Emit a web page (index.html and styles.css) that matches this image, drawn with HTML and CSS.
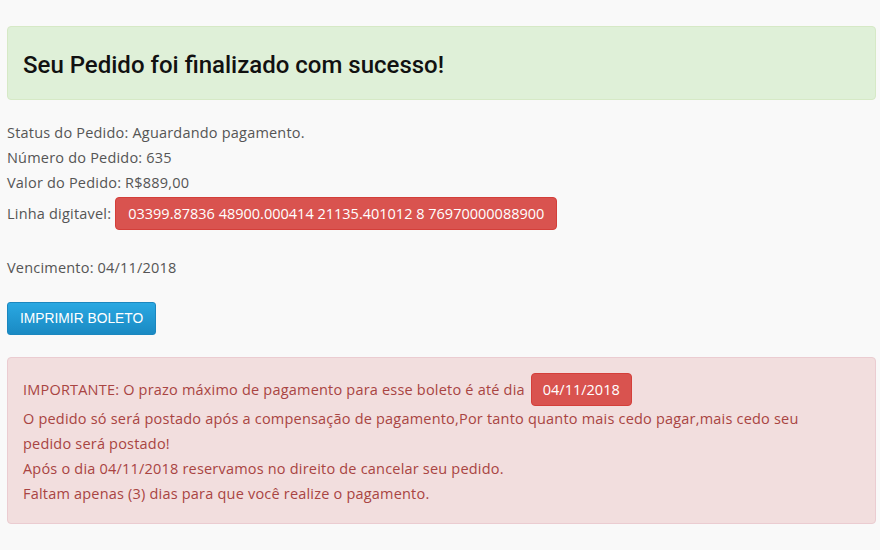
FILE: index.html
```html
<!DOCTYPE html>
<html lang="pt-BR">
<head>
<meta charset="utf-8">
<title>Pedido finalizado</title>
<link rel="stylesheet" href="styles.css">
</head>
<body>
<main class="page">
  <div class="alert alert-success">
    <h3 class="title">Seu Pedido foi finalizado com sucesso!</h3>
  </div>

  <div class="info">
    <p class="line">Status do Pedido: Aguardando pagamento.</p>
    <p class="line">Número do Pedido: 635</p>
    <p class="line">Valor do Pedido: R$889,00</p>
    <p class="line line-badge">Linha digitavel: <span class="badge">03399.87836 48900.000414 21135.401012 8 76970000088900</span></p>
    <p class="line line-gap">Vencimento: 04/11/2018</p>
  </div>

  <button class="btn-print" type="button">IMPRIMIR BOLETO</button>

  <div class="alert alert-danger">
    <p class="line line-badge first">IMPORTANTE: O prazo máximo de pagamento para esse boleto é até dia <span class="badge badge-date">04/11/2018</span></p>
    <p class="line">O pedido só será postado após a compensação de pagamento,Por tanto quanto mais cedo pagar,mais cedo seu pedido será postado!</p>
    <p class="line">Após o dia 04/11/2018 reservamos no direito de cancelar seu pedido.</p>
    <p class="line">Faltam apenas (3) dias para que você realize o pagamento.</p>
  </div>
</main>
</body>
</html>
```

FILE: styles.css
```css
* { box-sizing: border-box; }

html, body {
  margin: 0;
  background: #f9f9f9;
}

body {
  font-family: "Open Sans", "Noto Sans", sans-serif;
  font-size: 14.5px;
  letter-spacing: 0.2px;
  color: #555;
}

.page {
  padding: 26px 4px 20px 7px;
  display: flex;
  flex-direction: column;
  align-items: flex-start;
}

.alert {
  width: 100%;
  border: 1px solid transparent;
  border-radius: 4px;
}

.alert-success {
  background: #dff0d8;
  border-color: #d6e9c6;
  padding: 24px 15px 20px;
}

.title {
  margin: 0;
  font-family: Roboto, "Liberation Sans", sans-serif;
  font-weight: 500;
  font-size: 24px;
  line-height: 28px;
  letter-spacing: 0;
  color: #111;
}

.info {
  margin-top: 20px;
}

.line {
  margin: 0;
  line-height: 25px;
}

.line-badge {
  display: flex;
  align-items: center;
  height: 37px;
}

.line-badge.first {
  height: 33px;
}

.line-gap {
  margin-top: 23px;
}

.badge {
  display: inline-block;
  margin-left: 4px;
  background: #d9534f;
  border: 1px solid #d43f3a;
  border-radius: 4px;
  color: #fff;
  font-size: 14.5px;
  letter-spacing: 0;
  line-height: 31px;
  padding: 0 12px;
}

.badge-date {
  margin-left: 6px;
  padding: 0 11px;
}

.btn-print {
  margin-top: 22px;
  height: 33px;
  padding: 0 12px;
  border: 1px solid #1b87bf;
  border-radius: 3px;
  background: linear-gradient(#2aa8e2, #1a8ac3);
  color: #fff;
  font-family: "Liberation Sans", Arial, sans-serif;
  font-size: 13.8px;
  letter-spacing: 0;
}

.alert-danger {
  margin-top: 22px;
  background: #f2dede;
  border-color: #ebccd1;
  color: #a94442;
  padding: 15px 40px 17px 15px;
}
```
